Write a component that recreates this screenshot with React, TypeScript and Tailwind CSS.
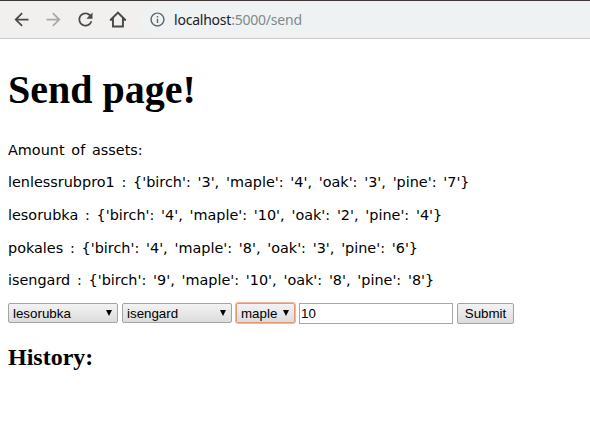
import React from "react";

const assets = [
  "lenlessrubpro1 : {'birch': '3', 'maple': '4', 'oak': '3', 'pine': '7'}",
  "lesorubka : {'birch': '4', 'maple': '10', 'oak': '2', 'pine': '4'}",
  "pokales : {'birch': '4', 'maple': '8', 'oak': '3', 'pine': '6'}",
  "isengard : {'birch': '9', 'maple': '10', 'oak': '8', 'pine': '8'}",
];

function NavIcon({ d, className }: { d: string; className: string }) {
  return (
    <svg viewBox="0 0 24 24" className={`size-[21px] shrink-0 ${className}`} fill="currentColor">
      <path d={d} />
    </svg>
  );
}

function Toolbar() {
  return (
    <header className="flex h-[39px] items-center border-t border-b border-t-[#3b3739] border-b-[#cbcaca] bg-[#f2f0ef]">
      <div className="flex w-[140px] shrink-0 items-center gap-[11px] pl-[11px] text-[#4a4848]">
        <NavIcon className="" d="M20 11H7.83l5.59-5.59L12 4l-8 8 8 8 1.41-1.41L7.83 13H20v-2z" />
        <NavIcon className="text-[#aaa8a7]" d="M12 4l-1.41 1.41L16.17 11H4v2h12.17l-5.58 5.59L12 20l8-8z" />
        <NavIcon
          className=""
          d="M17.65 6.35C16.2 4.9 14.21 4 12 4c-4.42 0-7.99 3.58-7.99 8s3.57 8 7.99 8c3.73 0 6.84-2.55 7.73-6h-2.08c-.82 2.33-3.04 4-5.65 4-3.31 0-6-2.69-6-6s2.69-6 6-6c1.66 0 3.14.69 4.22 1.78L13 11h7V4l-2.35 2.35z"
        />
        <NavIcon className="" d="M12.5 2.5 3.2 11.8V13.3H5.7V21h13.6v-7.7h2.5v-1.5L12.5 2.5zm0 3.1 4.6 4.6V18.8H7.9v-8.6l4.6-4.6z" />
      </div>
      <div className="flex h-[32px] flex-1 items-center rounded-l-full bg-[#eef2f3] pl-[9px]">
        <svg viewBox="0 0 24 24" className="size-[17px] shrink-0" fill="#5f6368">
          <path d="M11 17h2v-6h-2v6zm1-15C6.48 2 2 6.48 2 12s4.48 10 10 10 10-4.48 10-10S17.52 2 12 2zm0 18c-4.41 0-8-3.59-8-8s3.59-8 8-8 8 3.59 8 8-3.59 8-8 8zM11 9h2V7h-2v2z" />
        </svg>
        <span className="ml-2 font-['Noto_Sans',sans-serif] text-[14px] tracking-[-0.22px] whitespace-nowrap text-[#84898c]">
          <span className="text-[#202124]">localhost</span>:5000/send
        </span>
      </div>
    </header>
  );
}

function Picker({ value, className }: { value: string; className: string }) {
  return (
    <div className={`relative h-5 shrink-0 ${className}`}>
      <select className="block size-full appearance-none rounded-[2px] border border-inherit bg-linear-to-b from-[#f3f3f3] to-[#dcdcdc] pl-1 text-[13.333px] leading-[17px] text-black">
        <option>{value}</option>
      </select>
      <svg viewBox="0 0 6 6" className="pointer-events-none absolute top-[7px] right-[6px] size-[6px]">
        <path d="M0 0h6L3 6z" />
      </svg>
    </div>
  );
}

export default function App() {
  return (
    <div className="h-[440px] overflow-hidden bg-white text-black">
      <Toolbar />
      <main className="px-2">
        <h1 className="mt-[28px] h-[46px] font-['Liberation_Serif',serif] text-[40px] leading-[46px] font-bold">Send page!</h1>
        <div className="mt-[20.8px] font-['DejaVu_Sans',sans-serif] text-[14.4px] leading-[32.6px] [word-spacing:2.2px] whitespace-nowrap">
          <p>Amount of assets:</p>
          {assets.map((line) => (
            <p key={line}>{line}</p>
          ))}
        </div>
        <form className="mt-[6.2px] flex h-[21px] items-center gap-1 font-['Liberation_Sans',sans-serif]">
          <Picker value="lesorubka" className="w-[110px] border-[#a3a3a3]" />
          <Picker value="isengard" className="w-[110px] border-[#a3a3a3]" />
          <Picker value="maple" className="w-[59px] rounded-[2px] border-[#e39674] ring-1 ring-[#efb89f]" />
          <input
            readOnly
            value="10"
            className="h-[21px] w-[154px] border border-[#a8a8a8] bg-white pl-px text-[13.333px] outline-none"
          />
          <button
            type="button"
            className="h-[21px] w-[57px] rounded-[2px] border border-[#a3a3a3] bg-linear-to-b from-[#f3f3f3] to-[#dcdcdc] pt-px text-[13.333px] leading-[18px]"
          >
            Submit
          </button>
        </form>
        <h2 className="mt-[20px] font-['Liberation_Serif',serif] text-[24px] leading-[27px] font-bold">History:</h2>
      </main>
    </div>
  );
}
